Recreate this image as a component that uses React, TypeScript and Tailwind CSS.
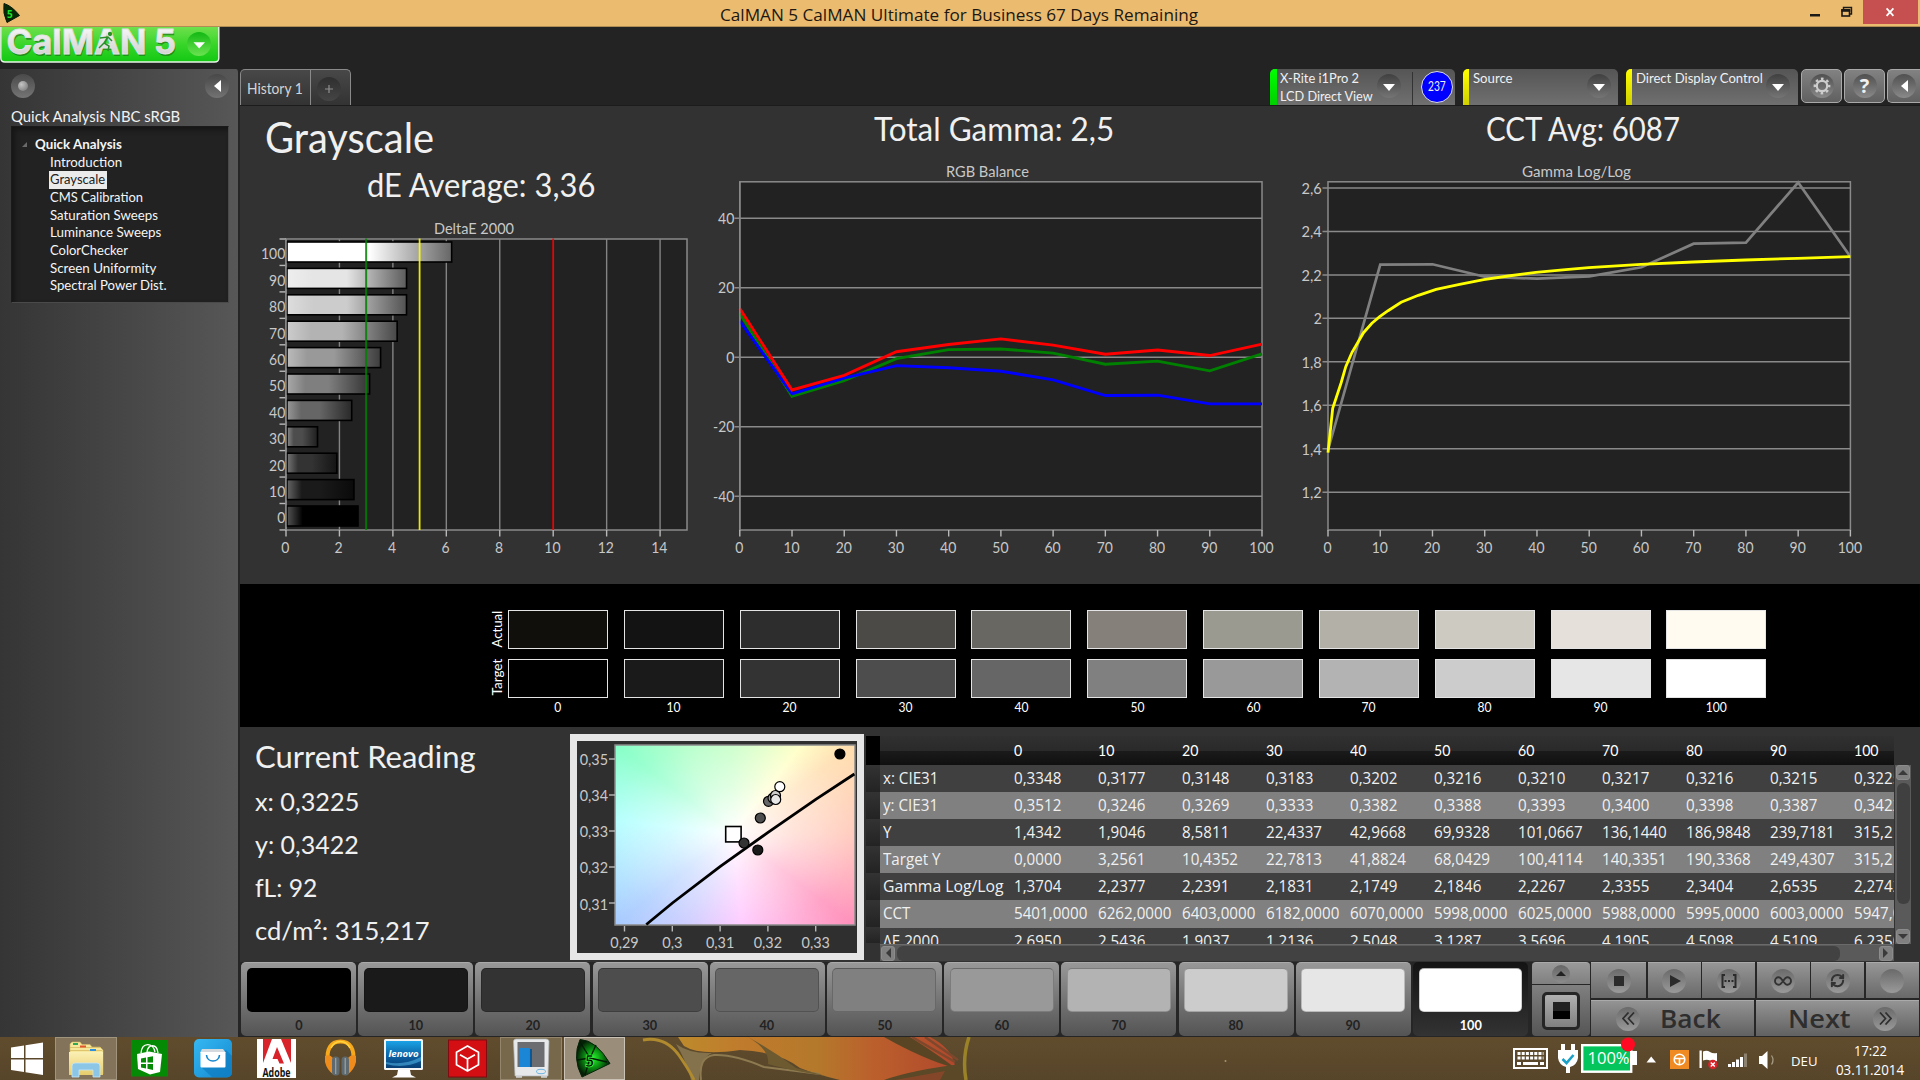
import { useLayoutEffect, useRef, useState, type ReactNode } from "react";
import { RefreshCw } from "lucide-react";

const LEVELS = [0, 10, 20, 30, 40, 50, 60, 70, 80, 90, 100];

const TREE = [
  { name: "Introduction", w: 72 },
  { name: "Grayscale", w: 55 },
  { name: "CMS Calibration", w: 93 },
  { name: "Saturation Sweeps", w: 108 },
  { name: "Luminance Sweeps", w: 111 },
  { name: "ColorChecker", w: 78 },
  { name: "Screen Uniformity", w: 106 },
  { name: "Spectral Power Dist.", w: 117 },
];

const ACTUAL = ["#110f0c", "#131313", "#2d2d2d", "#4b4a46", "#686762", "#85807a", "#9b9a90", "#b3b0a7", "#cccac1", "#e5e0d9", "#fffbf0"];
const TARGET = ["#000000", "#1a1a1a", "#333333", "#4d4d4d", "#666666", "#808080", "#999999", "#b3b3b3", "#cccccc", "#e6e6e6", "#ffffff"];

const DELTA_E = [2.695, 2.5436, 1.9037, 1.18, 2.46, 3.1287, 3.54, 4.16, 4.5098, 4.5109, 6.2];

const RGB = [
  { color: "#008000", v: [12.6, -11.2, -6.7, -0.4, 2.2, 2.4, 1.2, -2, -1.1, -3.9, 1] },
  { color: "#0000ff", v: [10.4, -10.5, -6, -2.4, -3, -4, -6.5, -11, -10.9, -13.4, -13.4] },
  { color: "#ff0000", v: [14, -9.4, -5.2, 1.6, 3.7, 5.3, 3.5, 0.9, 2.1, 0.5, 3.8] },
];

const GAMMA_Y = [450, 264.7, 264.3, 276.7, 278.7, 276.3, 267.3, 243.7, 242.7, 182.5, 256.7];
const GAMMA_TARGET = [
  [0, 452.7], [0.9, 408.3], [2.5, 383], [3.4, 366.7], [4.6, 352.3], [6.8, 332.7], [8.4, 323.3], [9.9, 316.7],
  [11.5, 310.7], [14, 302.3], [17.3, 295.3], [20.7, 289.3], [25.2, 284.3], [29.8, 279.7], [34.5, 276], [39.8, 272.3],
  [45.5, 269.7], [49.9, 267.7], [59.9, 264.3], [69.9, 262], [79.9, 260], [89.9, 258.3], [100, 256.7],
];

const TABLE = [
  ["x: CIE31", "0,3348", "0,3177", "0,3148", "0,3183", "0,3202", "0,3216", "0,3210", "0,3217", "0,3216", "0,3215", "0,3225"],
  ["y: CIE31", "0,3512", "0,3246", "0,3269", "0,3333", "0,3382", "0,3388", "0,3393", "0,3400", "0,3398", "0,3387", "0,3422"],
  ["Y", "1,4342", "1,9046", "8,5811", "22,4337", "42,9668", "69,9328", "101,0667", "136,1440", "186,9848", "239,7181", "315,2170"],
  ["Target Y", "0,0000", "3,2561", "10,4352", "22,7813", "41,8824", "68,0429", "100,4114", "140,3351", "190,3368", "249,4307", "315,2170"],
  ["Gamma Log/Log", "1,3704", "2,2377", "2,2391", "2,1831", "2,1749", "2,1846", "2,2267", "2,3355", "2,3404", "2,6535", "2,2742"],
  ["CCT", "5401,0000", "6262,0000", "6403,0000", "6182,0000", "6070,0000", "5998,0000", "6025,0000", "5988,0000", "5995,0000", "6003,0000", "5947,0000"],
  ["ΔE 2000", "2,6950", "2,5436", "1,9037", "1,2136", "2,5048", "3,1287", "3,5696", "4,1905", "4,5098", "4,5109", "6,2350"],
];

// Squeezes a single line of text horizontally to a given width
function Fit({ w, children, className = "origin-left" }: { w: number; children: ReactNode; className?: string }) {
  const ref = useRef<HTMLSpanElement>(null);
  const [k, setK] = useState(1);
  useLayoutEffect(() => {
    if (ref.current) setK(w / ref.current.offsetWidth);
  }, [w]);
  return (
    <span ref={ref} className={`inline-block whitespace-nowrap ${className}`} style={{ transform: `scaleX(${k})` }}>
      {children}
    </span>
  );
}

// Axis number in the condensed figures of the charts
function Num({ x, y, anchor = "middle", children }: { x: number; y: number; anchor?: "middle" | "end"; children: string | number }) {
  const s = String(children);
  const len = [...s].reduce((n, c) => n + (c === "," ? 4 : c === "-" ? 5 : 8.1), 0);
  return (
    <text x={x} y={y} textAnchor={anchor} textLength={len} lengthAdjust="spacingAndGlyphs">
      {s}
    </text>
  );
}

function TitleBar() {
  return (
    <header className="flex h-[27px] shrink-0 items-start border-b border-[#b08d54] bg-[#ebbc70]">
      <svg className="mt-[3px] ml-[2px] h-5 w-[19px]" viewBox="0 0 19 20">
        <path d="M2 0.5Q10 3 17.5 12.5L5 19.5Q0.5 10 2 0.5Z" fill="#042a06" stroke="#0a1a08" />
        <text x="5" y="14.5" fontSize="10" fontWeight="700" fill="#19e326" fontFamily="Open Sans, sans-serif">5</text>
      </svg>
      <div className="flex flex-1 justify-center pt-[3px] pl-[88px] font-['Open_Sans',sans-serif] text-[16.5px] leading-[23px] text-[#1c1710]">
        <Fit w={478} className="origin-center">CalMAN 5 CalMAN Ultimate for Business 67 Days Remaining</Fit>
      </div>
      <svg className="h-[25px] w-[110px]" viewBox="1810 0 110 25">
        <rect x="1810" y="14" width="10" height="2.5" fill="#1c1a16" />
        <path d="M1843.5 9V7.5H1851.5V14H1850" fill="none" stroke="#1c1a16" strokeWidth="1.4" />
        <rect x="1842" y="10" width="7.5" height="6" fill="none" stroke="#1c1a16" strokeWidth="1.6" />
        <rect x="1841.3" y="9" width="9" height="2.8" fill="#1c1a16" />
        <rect x="1863" y="0" width="55" height="24" fill="#c64f4f" />
        <path d="M1886.6 8.4L1893.4 15.8M1893.4 8.4L1886.6 15.8" stroke="#fff" strokeWidth="1.8" />
      </svg>
    </header>
  );
}

function Logo() {
  return (
    <svg className="h-[36px] w-[220px] overflow-visible" viewBox="0 27 220 36">
      <defs>
        <linearGradient id="lg" x1="0" y1="0" x2="0" y2="1">
          <stop offset="0" stopColor="#6fe04d" />
          <stop offset="0.5" stopColor="#38d529" />
          <stop offset="1" stopColor="#12c813" />
        </linearGradient>
        <linearGradient id="lt" x1="0" y1="0" x2="0" y2="1">
          <stop offset="0" stopColor="#ffffff" />
          <stop offset="1" stopColor="#c9c9c9" />
        </linearGradient>
        <linearGradient id="lc" x1="0" y1="0" x2="0" y2="1">
          <stop offset="0" stopColor="#12b814" />
          <stop offset="1" stopColor="#6be350" />
        </linearGradient>
      </defs>
      <path d="M0.8 27V58Q0.8 62 5 62H214.500Q218.800 62 218.800 58V27" fill="url(#lg)" stroke="#e9f5e6" strokeWidth="1.4" />
      <g fontFamily="Inter, sans-serif" fontWeight="700" fontSize="34">
        <text x="7.5" y="55.5" textLength="140" lengthAdjust="spacingAndGlyphs" fill="#20761c" opacity="0.7">CalMAN</text>
        <text x="155" y="55.5" textLength="22" lengthAdjust="spacingAndGlyphs" fill="#20761c" opacity="0.7">5</text>
        <text x="6.5" y="54" textLength="140" lengthAdjust="spacingAndGlyphs" fill="url(#lt)" stroke="#e2e2e2" strokeWidth="0.8">CalMAN</text>
        <text x="154" y="54" textLength="22" lengthAdjust="spacingAndGlyphs" fill="url(#lt)" stroke="#e2e2e2" strokeWidth="0.8">5</text>
      </g>
      {/* running man over the A */}
      <g stroke="#27902a" strokeWidth="1.5" fill="none">
        <circle cx="110" cy="34" r="1.4" fill="#27902a" />
        <path d="M108 37L104 43L109 46L108 51M104 43L99 48M100 38L108 37L112 41" />
      </g>
      <circle cx="199" cy="44" r="12" fill="url(#lc)" />
      <path d="M193.5 42.2H205L199.2 48.5Z" fill="#fff" />
    </svg>
  );
}

function Sidebar() {
  return (
    <aside className="flex w-[240px] flex-col rounded-tr-[4px] border-r-[2px] border-[#252525] bg-linear-to-r from-[#353535] to-[#575757]">
      <div className="flex h-[36px] items-start justify-between pt-[5px] pr-[9px] pl-[11px]">
        <div className="flex size-6 items-center justify-center rounded-full bg-linear-to-b from-[#4a4a4a] to-[#757575]">
          <div className="size-[10px] rounded-full bg-[radial-gradient(circle_at_35%_35%,#c4c4c4,#6f6f6f)]" />
        </div>
        <div className="flex size-6 items-center justify-center rounded-full bg-linear-to-b from-[#484848] to-[#737373]">
          <svg className="h-3 w-[7px]" viewBox="0 0 7 12"><path d="M7 0V12L0 6Z" fill="#fff" /></svg>
        </div>
      </div>
      <div className="h-[21px] pl-[11px] text-[16px] leading-[21px] text-[#f2f2f2]">
        <Fit w={169}>Quick Analysis NBC sRGB</Fit>
      </div>
      <div className="mr-[9px] ml-[11px] h-[177px] border border-[#1a1a1a] border-r-[#4a4a4a] border-b-[#4a4a4a] bg-[#222] pt-[7px] text-[13.5px] text-[#f5f5f5] shadow-[inset_3px_3px_5px_#161616]">
        <div className="flex h-[20px] items-center gap-[8px] pl-[10px] font-bold">
          <svg className="h-[5px] w-[5px]" viewBox="0 0 5 5"><path d="M5 0V5H0Z" fill="#6a6a6a" /></svg>
          <Fit w={87}>Quick Analysis</Fit>
        </div>
        {TREE.map((t) => (
          <div key={t.name} className="flex h-[17.6px] items-center pl-[37px] leading-[17.6px]">
            {t.name === "Grayscale" ? (
              <div className="h-[18px] w-[58px] bg-[#ebebeb] pl-[1px] text-[#222]"><Fit w={t.w}>{t.name}</Fit></div>
            ) : (
              <div className="pl-[1px]"><Fit w={t.w}>{t.name}</Fit></div>
            )}
          </div>
        ))}
      </div>
    </aside>
  );
}

function DropCircle() {
  return (
    <div className="mt-[5px] flex size-6 items-center justify-center rounded-full bg-linear-to-b from-[#404040] to-[#757575]">
      <svg className="mt-[3px] h-[7px] w-[12px]" viewBox="0 0 12 7"><path d="M0 0H12L6 7Z" fill="#fff" /></svg>
    </div>
  );
}

function TopTabs() {
  return (
    <div className="flex h-[36px] items-start text-[14.5px]">
      <div className="flex h-[36px] w-[111px] rounded-t-[5px] border border-b-0 border-[#8a8a8a] bg-linear-to-b from-[#484848] to-[#333] text-[#d5d5d5]">
        <div className="w-[70px] border-r border-[#8a8a8a] pl-[6px] leading-[38px]"><Fit w={56}>History 1</Fit></div>
        <div className="mt-[7px] ml-[6px] flex size-6 items-center justify-center rounded-full bg-linear-to-b from-[#2f2f2f] to-[#454545]">
          <svg className="size-[8px]" viewBox="0 0 8 8"><path d="M4 0V8M0 4H8" stroke="#909090" strokeWidth="1.2" /></svg>
        </div>
      </div>
      <div className="ml-auto flex items-start text-[#f0f0f0]">
        <div className="mr-[8px] flex h-9 w-[185px] overflow-hidden rounded-t-[5px] bg-linear-to-b from-[#555] to-[#707070]">
          <div className="w-[7px] bg-linear-to-b from-[#00ff00] to-[#00cf00]" />
          <div className="w-[100px] pt-px pl-[3px] text-[13.5px] leading-[17.5px]">
            <div><Fit w={79}>X-Rite i1Pro 2</Fit></div>
            <div><Fit w={93}>LCD Direct View</Fit></div>
          </div>
          <DropCircle />
          <div className="mt-[3px] ml-[11px] h-[33px] border-l border-[#333]" />
          <div className="mt-[2px] ml-[8px] flex h-8 w-8 items-center justify-center rounded-full border border-[#ddd] bg-[#0000ff] text-[12.5px]">
            <Fit w={18} className="origin-center">237</Fit>
          </div>
        </div>
        <div className="mr-[8px] flex h-9 w-[155px] overflow-hidden rounded-t-[5px] bg-linear-to-b from-[#555] to-[#707070]">
          <div className="w-[6px] bg-linear-to-b from-[#ffff00] to-[#d0d000]" />
          <div className="w-[118px] pt-px pl-[4px] text-[13.5px] leading-[17.5px]"><Fit w={40}>Source</Fit></div>
          <DropCircle />
        </div>
        <div className="mr-[3px] flex h-9 w-[172px] overflow-hidden rounded-t-[5px] bg-linear-to-b from-[#555] to-[#707070]">
          <div className="w-[6px] bg-linear-to-b from-[#ffff00] to-[#d0d000]" />
          <div className="w-[134px] pt-px pl-[4px] text-[13.5px] leading-[17.5px]"><Fit w={127}>Direct Display Control</Fit></div>
          <DropCircle />
        </div>
        <div className="mr-[2px] flex h-[34px] w-[41px] items-center justify-center rounded-[5px] border-[1.5px] border-[#a9a9a9] bg-linear-to-b from-[#828282] to-[#606060]">
          <div className="flex size-6 items-center justify-center rounded-full bg-linear-to-b from-[#505050] to-[#8a8a8a]">
            <svg className="size-[18px]" viewBox="0 0 18 18" fill="none" stroke="#cdcdcd">
              <circle cx="9" cy="9" r="5.2" strokeWidth="2.2" />
              <circle cx="9" cy="9" r="7.2" strokeWidth="2.4" strokeDasharray="2.6 3.055" strokeDashoffset="1.3" />
            </svg>
          </div>
        </div>
        <div className="mr-[2px] flex h-[34px] w-[41px] items-center justify-center rounded-[5px] border-[1.5px] border-[#a9a9a9] bg-linear-to-b from-[#828282] to-[#606060]">
          <div className="flex size-6 items-center justify-center rounded-full bg-linear-to-b from-[#505050] to-[#8a8a8a] font-['Open_Sans',sans-serif] text-[20px] font-bold">?</div>
        </div>
        <div className="flex h-[34px] w-[33px] items-center justify-center rounded-l-[5px] border-[1.5px] border-r-0 border-[#a9a9a9] bg-linear-to-b from-[#828282] to-[#606060]">
          <div className="flex size-6 items-center justify-center rounded-full bg-linear-to-b from-[#505050] to-[#8a8a8a]">
            <svg className="h-3 w-[7px]" viewBox="0 0 7 12"><path d="M7 0V12L0 6Z" fill="#fff" /></svg>
          </div>
        </div>
      </div>
    </div>
  );
}

const shade = (v: number) => `rgb(${v},${v},${v})`;

function DeltaChart() {
  const px = (v: number) => 286 + v * 26.72;
  return (
    <svg className="h-[364px] w-[460px] font-[Lato,sans-serif]" viewBox="240 220 460 364" fontSize="15" fill="#c8c8c8">
      <text x="474" y="233.5" textAnchor="middle" textLength="80" lengthAdjust="spacingAndGlyphs">DeltaE 2000</text>
      <rect x="286" y="239" width="401" height="291" fill="#222" stroke="#8a8a8a" strokeWidth="1.5" />
      {[2, 4, 6, 8, 12, 14].map((v) => (
        <path key={v} d={`M${px(v)} 239V530`} stroke="#848484" strokeWidth="1.4" />
      ))}
      {[0, 2, 4, 6, 8, 10, 12, 14].map((v) => (
        <g key={v}>
          <path d={`M${px(v)} 530V536.5`} stroke="#b8b8b8" strokeWidth="1.4" />
          <Num x={px(v) - 0.8} y={552.5}>{v}</Num>
        </g>
      ))}
      {Array.from({ length: 12 }, (_, i) => (
        <path key={i} d={`M279.5 ${239 + i * 26.45}H286`} stroke="#b8b8b8" strokeWidth="1.4" />
      ))}
      {LEVELS.map((l, i) => {
        const row = 10 - i;
        const c = Math.round(l * 2.55);
        return (
          <g key={l}>
            <linearGradient id={`bar${l}`}>
              <stop offset="0" stopColor={shade(Math.round(Math.min(255, c + (255 - c) * 0.33)))} />
              <stop offset="0.22" stopColor={shade(c)} />
              <stop offset="0.5" stopColor={shade(c)} />
              <stop offset="1" stopColor={shade(Math.round(c * 0.4))} />
            </linearGradient>
            <rect x="287" y={242 + row * 26.4} width={px(DELTA_E[i]) - 287} height="20" fill={`url(#bar${l})`} stroke="#000" strokeWidth="1.6" />
            <Num x={285.3} y={259.3 + row * 26.4} anchor="end">{l}</Num>
          </g>
        );
      })}
      <path d={`M${px(0)} 239V530`} stroke="#8a8a8a" strokeWidth="1.5" />
      <path d={`M${px(3)} 238.5V530`} stroke="#008000" strokeOpacity="0.85" strokeWidth="2" />
      <path d={`M${px(5)} 238.5V530`} stroke="#ffff00" strokeOpacity="0.9" strokeWidth="1.8" />
      <path d={`M${px(10)} 238.5V530`} stroke="#ff0000" strokeOpacity="0.9" strokeWidth="1.8" />
    </svg>
  );
}

function XAxis({ x0, w }: { x0: number; w: number }) {
  return (
    <>
      {LEVELS.map((l) => (
        <g key={l}>
          <path d={`M${x0 + (l / 100) * w} 530V536.5`} stroke="#b8b8b8" strokeWidth="1.4" />
          <Num x={x0 + (l / 100) * w - 0.5} y={552.5}>{l}</Num>
        </g>
      ))}
    </>
  );
}

function BalanceChart() {
  const px = (l: number) => 739.8 + l * 5.222;
  const py = (v: number) => 357.3 - v * 3.475;
  return (
    <svg className="h-[424px] w-[580px] font-[Lato,sans-serif]" viewBox="700 160 580 424" fontSize="15" fill="#c8c8c8">
      <text x="987.4" y="176.7" textAnchor="middle" textLength="83" lengthAdjust="spacingAndGlyphs">RGB Balance</text>
      <rect x="739.8" y="181.8" width="522.2" height="348.2" fill="#222" stroke="#8a8a8a" strokeWidth="1.5" />
      {[40, 20, 0, -20, -40].map((v) => (
        <g key={v}>
          <path d={`M734.5 ${py(v)}H1262`} stroke="#8a8a8a" strokeWidth="1.5" />
          <Num x={734.3} y={py(v) + 5.6} anchor="end">{v}</Num>
        </g>
      ))}
      <XAxis x0={739.8} w={522.2} />
      {RGB.map((s) => (
        <polyline key={s.color} fill="none" stroke={s.color} strokeWidth="2.9" points={s.v.map((v, i) => `${px(i * 10)},${py(v)}`).join(" ")} />
      ))}
      <path d="M739.8 181.8V530" stroke="#8a8a8a" strokeWidth="1.5" />
    </svg>
  );
}

function GammaChart() {
  const px = (l: number) => 1328 + l * 5.224;
  return (
    <svg className="h-[424px] w-[640px] font-[Lato,sans-serif]" viewBox="1280 160 640 424" fontSize="15" fill="#c8c8c8">
      <text x="1576.5" y="176.7" textAnchor="middle" textLength="109" lengthAdjust="spacingAndGlyphs">Gamma Log/Log</text>
      <rect x="1328" y="181.8" width="522.4" height="348.2" fill="#222" stroke="#8a8a8a" strokeWidth="1.5" />
      {["2,6", "2,4", "2,2", "2", "1,8", "1,6", "1,4", "1,2"].map((v, i) => (
        <g key={v}>
          <path d={`M1322.5 ${188 + i * 43.45}H1850`} stroke="#8a8a8a" strokeWidth="1.5" />
          <Num x={1321.8} y={193.6 + i * 43.5} anchor="end">{v}</Num>
        </g>
      ))}
      <XAxis x0={1328} w={522.4} />
      <polyline fill="none" stroke="#808080" strokeWidth="2.7" points={GAMMA_Y.map((y, i) => `${px(i * 10)},${y}`).join(" ")} />
      <polyline fill="none" stroke="#ffff00" strokeWidth="2.8" points={GAMMA_TARGET.map(([x, y]) => `${px(x)},${y}`).join(" ")} />
    </svg>
  );
}

function Charts() {
  return (
    <section className="flex h-[479px] border-t border-[#1c1c1c] bg-[#323232] text-[#f0f0f0]">
      <div className="w-[460px]">
        <div className="h-[114px] overflow-hidden">
          <div className="h-[58px] pt-[3px] pl-[25px] text-[42px] leading-[56px]"><Fit w={169}>Grayscale</Fit></div>
          <div className="pl-[127px] text-[32px] leading-[42px]"><Fit w={228}>dE Average: 3,36</Fit></div>
        </div>
        <DeltaChart />
      </div>
      <div className="w-[580px]">
        <div className="h-[54px] pl-[174px] text-[32px] leading-[45px]"><Fit w={240}>Total Gamma: 2,5</Fit></div>
        <BalanceChart />
      </div>
      <div className="w-[640px]">
        <div className="h-[54px] pl-[206px] text-[32px] leading-[45px]"><Fit w={194}>CCT Avg: 6087</Fit></div>
        <GammaChart />
      </div>
    </section>
  );
}

function Swatches() {
  return (
    <section className="flex h-[143px] bg-black pt-[26px] pl-[247px] text-[13px] text-white">
      <div className="flex w-[21px] flex-col gap-[9px] pl-[1px]">
        {["Actual", "Target"].map((t) => (
          <div key={t} className="flex h-[39px] w-[18px] items-center justify-center">
            <span className="-rotate-90 text-[13.5px]"><Fit w={37} className="origin-center">{t}</Fit></span>
          </div>
        ))}
      </div>
      <div className="flex gap-[15.85px]">
        {LEVELS.map((l, i) => (
          <div key={l} className="w-[100px]">
            <div className="mb-[9.5px] h-[39px] border-[1.5px] border-[#e4e4e4]" style={{ backgroundColor: ACTUAL[i] }} />
            <div className="h-[39px] border-[1.5px] border-[#e4e4e4]" style={{ backgroundColor: TARGET[i] }} />
            <div className="text-center text-[13px] leading-[18px]">
              <span className="inline-block scale-x-[0.93]">{l}</span>
            </div>
          </div>
        ))}
      </div>
    </section>
  );
}

const DOTS = [
  { x: 839.9, y: 754, c: "#000" },
  { x: 757.8, y: 850, c: "#1a1a1a" },
  { x: 744, y: 843, c: "#333" },
  { x: 760.3, y: 818, c: "#4d4d4d" },
  { x: 768.5, y: 801.3, c: "#666" },
  { x: 773, y: 798, c: "#999" },
  { x: 775.5, y: 795.5, c: "#ccc" },
  { x: 775.7, y: 799.5, c: "#e6e6e6" },
  { x: 779.8, y: 786.7, c: "#fff" },
];

function CieBox() {
  return (
    <div className="h-[226px] w-[294px] shrink-0 border-[7px] border-[#e6e6e6] bg-[#2f2f2f] pt-[4px] pl-[38px]">
      <svg
        className="h-[180px] w-[240px] overflow-visible bg-[radial-gradient(ellipse_75%_75%_at_49%_49%,#ffffff,rgba(255,255,255,0.55)_35%,rgba(255,255,255,0.2)_70%,transparent),conic-gradient(from_0deg_at_49%_49%,#beffbe,#e0ffbe_22deg,#ffffbe_38deg,#ffdcaa_54deg,#ffbeac_90deg,#ff8cb8_127deg,#ffa8dc_150deg,#ffbeff_174deg,#c8c4ff_205deg,#a4c8ff_232deg,#a0ffff_276deg,#80ffc4_307deg,#a4ffc0_330deg,#beffbe)] font-[Lato,sans-serif]"
        viewBox="615 745 240 180"
        fontSize="15"
        fill="#c8c8c8"
      >
        <rect x="615" y="745" width="240" height="180" fill="none" stroke="#8a8a8a" strokeWidth="1.5" />
        {["0,35", "0,34", "0,33", "0,32", "0,31"].map((t, i) => (
          <g key={t}>
            <path d={`M609 ${759 + i * 36}H615`} stroke="#b8b8b8" strokeWidth="1.4" />
            <Num x={608} y={764.8 + i * 36.2} anchor="end">{t}</Num>
          </g>
        ))}
        {["0,29", "0,3", "0,31", "0,32", "0,33"].map((t, i) => (
          <g key={t}>
            <path d={`M${624.5 + i * 47.8} 926V931.5`} stroke="#b8b8b8" strokeWidth="1.4" />
            <Num x={624.5 + i * 47.8} y={948.2}>{t}</Num>
          </g>
        ))}
        <path d="M646.3 924.5L672.4 903L720 866.7L767.7 832.7L815.8 799.3L854.4 774" fill="none" stroke="#000" strokeWidth="2.8" />
        <rect x="725.7" y="826.5" width="15.4" height="15.4" fill="#fff" stroke="#000" strokeWidth="1.6" />
        {DOTS.map((d) => (
          <circle key={d.x} cx={d.x} cy={d.y} r="5" fill={d.c} stroke="#000" strokeWidth="1.2" />
        ))}
      </svg>
    </div>
  );
}

function ScrollBtn({ d, className }: { d: string; className: string }) {
  return (
    <div className={`flex shrink-0 items-center justify-center rounded-[3px] border border-[#8c8c8c] bg-[#808080] ${className}`}>
      <svg className="size-[10px]" viewBox="0 0 10 10"><path d={d} fill="#3a3a3a" /></svg>
    </div>
  );
}

function DataTable() {
  return (
    <div className="mt-[9px] ml-[2px] flex h-[225px]">
      <div className="w-[14px]">
        <div className="h-[29px] bg-black" />
        {TABLE.map((r) => (
          <div key={r[0]} className="h-[27px] bg-linear-to-b from-[#333] to-[#232323] last:h-[16px]" />
        ))}
      </div>
      <div className="w-[1014px]">
        <div className="flex h-[29px] overflow-hidden bg-[linear-gradient(#303030,#2a2a2a_50%,#1b1b1b_50%,#101010)] pl-[134px] text-[15px] leading-[29px] text-white">
          {LEVELS.map((l) => (
            <div key={l} className="w-[84px] shrink-0">
              <span className="inline-block origin-left scale-x-[0.94]">{l}</span>
            </div>
          ))}
        </div>
        <div className="h-[179px] overflow-hidden font-['Open_Sans',sans-serif] text-[16.3px] leading-[27px] text-[#f0f0f0]">
          {TABLE.map((r) => (
            <div key={r[0]} className="flex h-[27.1px] bg-[#404040] whitespace-nowrap even:bg-[#808080]">
              {r.map((c, i) => (
                <div key={i} className={i === 0 ? "w-[134px] shrink-0 pl-[3px]" : "w-[84px] shrink-0"}>
                  {c === "Gamma Log/Log" ? (
                    <Fit w={121}>{c}</Fit>
                  ) : (
                    <span className="inline-block origin-left scale-x-[0.932]">{c}</span>
                  )}
                </div>
              ))}
            </div>
          ))}
        </div>
        <div className="flex h-[17px] items-center border-t border-[#6a6a6a] bg-[#5a5a5a] px-px">
          <ScrollBtn d="M8 0V10L3 5Z" className="h-[15px] w-[14px]" />
          <div className="ml-[2px] h-[15px] w-[943px] rounded-[6px] bg-[#424242]" />
          <ScrollBtn d="M2 0V10L7 5Z" className="ml-auto h-[15px] w-[14px]" />
        </div>
      </div>
      <div className="mt-[29px] ml-px flex h-[179px] w-4 flex-col items-center bg-[#5a5a5a]">
        <ScrollBtn d="M0 7H10L5 2Z" className="h-[15px] w-[14px]" />
        <div className="mt-[3px] h-[121px] w-[13px] rounded-[6px] bg-[#404040]" />
        <ScrollBtn d="M0 2H10L5 7Z" className="mt-auto h-[15px] w-[14px]" />
      </div>
    </div>
  );
}

function Reading() {
  return (
    <section className="flex h-[235px] bg-[#323232] text-[#f0f0f0]">
      <div className="w-[330px] pt-[7px] pl-[15px] text-[25px] leading-[43px]">
        <div className="h-[46px] text-[31px] leading-[44px]"><Fit w={221}>Current Reading</Fit></div>
        <div><Fit w={104}>x: 0,3225</Fit></div>
        <div><Fit w={104}>y: 0,3422</Fit></div>
        <div><Fit w={62}>fL: 92</Fit></div>
        <div><Fit w={175}>cd/m²: 315,217</Fit></div>
      </div>
      <div className="pt-[7px]"><CieBox /></div>
      <DataTable />
    </section>
  );
}

function RoundIcon({ children }: { children?: ReactNode }) {
  return (
    <div className="flex size-6 items-center justify-center rounded-full bg-linear-to-b from-[#6a6a6a] to-[#9a9a9a]">
      {children}
    </div>
  );
}

const TOOLS: ReactNode[] = [
  <svg key="s" className="size-[10px]" viewBox="0 0 10 10"><rect width="10" height="10" fill="#2b2b2b" /></svg>,
  <svg key="p" className="ml-[2px] h-3 w-[11px]" viewBox="0 0 11 12"><path d="M0 0L11 6L0 12Z" fill="#2b2b2b" /></svg>,
  <svg key="r" className="h-[14px] w-4" viewBox="0 0 16 14">
    <path d="M4 1H1.5V13H4M12 1H14.5V13H12" fill="none" stroke="#2b2b2b" strokeWidth="2" />
    <path d="M3.5 7H12.5" stroke="#2b2b2b" strokeWidth="2" strokeDasharray="2 1.5" />
  </svg>,
  <svg key="i" className="h-[10px] w-[18px]" viewBox="0 0 18 10">
    <path d="M9 5C7 2 6 1.2 4.6 1.2A3.6 3.8 0 0 0 4.6 8.8C6 8.8 7 8 9 5C11 2 12 1.2 13.4 1.2A3.6 3.8 0 0 1 13.4 8.8C12 8.8 11 8 9 5Z" fill="none" stroke="#333" strokeWidth="1.9" />
  </svg>,
  <RefreshCw key="l" size={15} color="#333" strokeWidth={3.2} />,
  null,
];

function Patterns() {
  return (
    <section className="flex h-[75px] bg-[#262626]">
      <div className="flex w-[1292px] gap-[2.2px] pl-px">
        {LEVELS.map((l, i) => (
          <div
            key={l}
            className={
              l === 100
                ? "h-[74px] w-[115px] rounded-[5px] bg-linear-to-b from-[#141414] to-[#333] px-[6px] pt-[6px] text-white"
                : "h-[74px] w-[115px] rounded-[5px] border-t border-[#aaa] bg-linear-to-b from-[#989898] to-[#545454] px-[5.5px] pt-[5px] text-[#222]"
            }
          >
            <div className="h-[44px] rounded-[5px] border border-[#00000030] border-t-[#00000050]" style={{ backgroundColor: TARGET[i] }} />
            <div className="pt-[4px] text-center text-[13.5px] leading-[18px] font-bold">
              <span className="inline-block scale-x-[0.94]">{l}</span>
            </div>
          </div>
        ))}
      </div>
      <div className="flex w-[58px] flex-col">
        <div className="flex h-[22px] items-center justify-center rounded-t-[4px] border-t border-[#aaa] bg-linear-to-b from-[#999] to-[#808080]">
          <div className="flex size-[18px] items-center justify-center rounded-full bg-linear-to-b from-[#666] to-[#8c8c8c]">
            <svg className="h-[5px] w-[10px]" viewBox="0 0 10 5"><path d="M0 5H10L5 0Z" fill="#222" /></svg>
          </div>
        </div>
        <div className="mt-px flex h-[51px] items-center justify-center rounded-b-[4px] bg-linear-to-b from-[#808080] to-[#555]">
          <div className="flex size-[38px] items-center justify-center rounded-[5px] border-[3px] border-[#252525] bg-linear-to-b from-[#b0b0b0] to-[#808080]">
            <div className="size-[17px] bg-[linear-gradient(#222_50%,#000_50%)]" />
          </div>
        </div>
      </div>
      <div className="ml-px flex-1">
        <div className="flex h-[36px] gap-[1.5px] pr-px">
          {TOOLS.map((t, i) => (
            <div key={i} className="flex w-[53px] items-center justify-center border-t border-[#aaa] bg-linear-to-b from-[#969696] to-[#696969] first:w-[55px] last:flex-1">
              <RoundIcon>{t}</RoundIcon>
            </div>
          ))}
        </div>
        <div className="mt-[2px] flex h-[36px] gap-[1.5px] pr-px font-['Open_Sans',sans-serif] text-[25px] font-semibold text-[#2e2e2e]">
          <div className="flex w-[163px] items-center border-t border-[#aaa] bg-linear-to-b from-[#949494] to-[#616161] pl-[25px]">
            <RoundIcon>
              <svg className="h-[13px] w-[13px]" viewBox="0 0 13 13"><path d="M6.5 0.5L1 6.5L6.5 12.5M12 0.5L6.5 6.5L12 12.5" fill="none" stroke="#2e2e2e" strokeWidth="1.7" /></svg>
            </RoundIcon>
            <span className="ml-[20px]"><Fit w={61}>Back</Fit></span>
          </div>
          <div className="flex flex-1 items-center justify-between border-t border-[#aaa] bg-linear-to-b from-[#949494] to-[#616161] pr-[22px] pl-[32px]">
            <Fit w={63}>Next</Fit>
            <RoundIcon>
              <svg className="h-[13px] w-[13px]" viewBox="0 0 13 13"><path d="M1 0.5L6.5 6.5L1 12.5M6.5 0.5L12 6.5L6.5 12.5" fill="none" stroke="#2e2e2e" strokeWidth="1.7" /></svg>
            </RoundIcon>
          </div>
        </div>
      </div>
    </section>
  );
}

function TaskIcons() {
  return (
    <svg className="h-[43px] w-[640px]" viewBox="0 1037 640 43">
      <defs>
        <linearGradient id="bag" x1="0" y1="0" x2="1" y2="1">
          <stop offset="0" stopColor="#35b8f2" />
          <stop offset="1" stopColor="#1287cf" />
        </linearGradient>
        <linearGradient id="folder" x1="0" y1="0" x2="0" y2="1">
          <stop offset="0" stopColor="#fbf0b4" />
          <stop offset="1" stopColor="#e6cc6c" />
        </linearGradient>
        <linearGradient id="screen" x1="0" y1="0" x2="0" y2="1">
          <stop offset="0" stopColor="#1ba3e6" />
          <stop offset="0.6" stopColor="#0a5d9e" />
          <stop offset="1" stopColor="#083e74" />
        </linearGradient>
        <radialGradient id="fan">
          <stop offset="0" stopColor="#27f52c" />
          <stop offset="0.5" stopColor="#0a8f12" />
          <stop offset="1" stopColor="#042006" />
        </radialGradient>
      </defs>
      {/* start */}
      <path d="M11 1047.5L24 1045.5V1058H11ZM25.5 1045.2L43 1042.5V1058H25.5ZM11 1059.5H24V1072L11 1070ZM25.5 1059.5H43V1075L25.5 1072.2Z" fill="#fff" />
      {/* file explorer */}
      <rect x="55.5" y="1037.5" width="61" height="42" fill="#82735a" stroke="#a1947d" />
      <path d="M70 1044L72 1042H80L82 1044.5H90L92 1047H100L103 1050V1074H70Z" fill="#f6e79a" stroke="#cfb75e" strokeWidth="0.6" />
      <path d="M69 1052H103V1075H69Z" fill="url(#folder)" />
      <path d="M70 1047.5H101M70 1050.5H102" stroke="#d8bd62" strokeWidth="0.8" />
      <rect x="73" y="1043" width="5" height="2" fill="#33a852" />
      <rect x="80" y="1045.5" width="6" height="2" fill="#e4572e" />
      <rect x="90" y="1049" width="6" height="2" fill="#2d8fdd" />
      <path d="M72 1077V1066Q72 1063 75 1063H97Q100 1063 100 1066V1077H93V1070H79V1077Z" fill="#8cc6e6" stroke="#c7e7f6" strokeWidth="0.8" />
      {/* store */}
      <rect x="131" y="1040" width="37" height="36.5" fill="#058a05" />
      <path d="M137 1054L149 1051.500L162 1054L160 1072L150 1074.500L138 1069Z" fill="#fff" />
      <path d="M141 1053C142 1042 153 1042 155 1052M147 1052C148 1044 157 1043 158 1053" fill="none" stroke="#fff" strokeWidth="1.3" />
      <path d="M141 1058.5L146 1057.5V1062.5H141ZM147.500 1057.300L153 1056.300V1062.5H147.500ZM141 1064H146V1068.500L141 1067.500ZM147.500 1064H153V1070L147.500 1068.800Z" fill="#058a05" />
      {/* shopping bag */}
      <rect x="194" y="1039" width="38" height="38.5" rx="5" fill="url(#bag)" />
      <path d="M226 1050L232 1056V1072Q232 1077 227 1077H212L201 1067Z" fill="#0f7cc0" opacity="0.7" />
      <path d="M202 1049H223L226 1053H200Z" fill="#d4dade" />
      <rect x="200.5" y="1052" width="25" height="15.5" rx="1" fill="#fff" />
      <path d="M206.5 1055C207 1063 219 1063 219.5 1055" fill="none" stroke="#1287cf" strokeWidth="1.6" />
      {/* Adobe */}
      <rect x="257" y="1039" width="39" height="39" fill="#fff" />
      <path d="M263 1039H272L263 1063ZM281 1039H291V1063ZM277 1047L284 1063.500H279.5L277.5 1059H272.5Z" fill="#d8232a" />
      <text x="276.5" y="1077" textAnchor="middle" fontSize="12" fontWeight="700" textLength="28" lengthAdjust="spacingAndGlyphs" fontFamily="Open Sans, sans-serif" fill="#111">Adobe</text>
      {/* headphones */}
      <path d="M328 1062C326 1049 331 1041.500 340.500 1041.500S355 1049 353 1062" fill="none" stroke="#f7a81b" strokeWidth="4" />
      <path d="M331 1048Q334 1041.500 340.500 1041.500T350 1048" fill="none" stroke="#ffd23f" strokeWidth="1.6" />
      <path d="M325 1056Q330 1054 333 1058V1074Q327 1070 325 1062ZM356 1056Q351 1054 348 1058V1074Q354 1070 356 1062Z" fill="#ef8c1c" />
      <rect x="332" y="1056.500" width="7.5" height="19" rx="3.5" fill="#5f6a70" />
      <rect x="341.500" y="1056.500" width="7.5" height="19" rx="3.5" fill="#5f6a70" />
      <path d="M335.700 1058V1074M345.200 1058V1074" stroke="#9aa4a9" strokeWidth="1.2" />
      {/* lenovo */}
      <rect x="384" y="1039" width="39" height="31" rx="1.5" fill="#f4f4f4" />
      <rect x="386" y="1041" width="35" height="27" fill="url(#screen)" />
      <path d="M386 1062Q403 1066 421 1057V1061Q404 1069 386 1064Z" fill="#5cc1ef" opacity="0.5" />
      <text x="403.5" y="1056.5" textAnchor="middle" fontSize="9" fontStyle="italic" fontWeight="700" textLength="30" lengthAdjust="spacingAndGlyphs" fontFamily="Open Sans, sans-serif" fill="#fff">lenovo</text>
      <path d="M398 1070H410L411 1075L416 1077.5H392L397 1075Z" fill="#fff" />
      {/* red cube */}
      <rect x="448.5" y="1040" width="38" height="37" fill="#d40f14" stroke="#7d0d10" />
      <path d="M467.5 1046L478.5 1052.3V1064.7L467.5 1071L456.5 1064.7V1052.3ZM467.5 1071V1059L460 1054.8M467.5 1059L475 1054.8" fill="none" stroke="#fff" strokeWidth="1.7" />
      {/* tower pc */}
      <rect x="500.5" y="1037.5" width="61" height="42" fill="#77674b" stroke="#93866d" />
      <path d="M513.5 1041Q514 1039 516 1039H546Q548.5 1039 549 1041L548 1076H515Z" fill="#e6e8ea" stroke="#b0b4b8" strokeWidth="0.7" />
      <rect x="517.5" y="1042" width="27" height="25" fill="#6b6d70" />
      <rect x="520" y="1048" width="9" height="19" fill="#1c86d6" />
      <rect x="530" y="1049" width="2" height="18" fill="#0d5794" />
      <ellipse cx="541" cy="1071.5" rx="4.5" ry="2.2" fill="none" stroke="#4ba7e0" strokeWidth="0.8" />
      <rect x="516" y="1076" width="6" height="1.8" fill="#ccc" />
      <rect x="541" y="1076" width="6" height="1.8" fill="#ccc" />
      {/* CalMAN */}
      <rect x="564.5" y="1037.5" width="60" height="42" fill="#9a8e7b" stroke="#c9c2b5" />
      <path d="M580 1039.5Q596 1040 610 1063.5L582 1077Q572 1058 580 1039.5Z" fill="url(#fan)" stroke="#06240a" />
      <path d="M590 1058L580 1042M590 1058L596 1045M590 1058L577 1060M590 1058L607 1062M590 1058L585 1075" stroke="#031a05" strokeWidth="1.3" />
      <text x="585" y="1066.5" fontSize="16" fontWeight="700" fontFamily="Open Sans, sans-serif" fill="#000" stroke="#49ff50" strokeWidth="0.7">5</text>
    </svg>
  );
}

// Strip of the desktop painting that shows through the taskbar
function Painting() {
  return (
    <svg className="h-[43px] w-[860px]" viewBox="640 1037 860 43">
      <defs>
        <linearGradient id="paint">
          <stop offset="0" stopColor="#bd8a2c" />
          <stop offset="0.25" stopColor="#c07a2c" />
          <stop offset="0.5" stopColor="#b4792b" />
          <stop offset="0.7" stopColor="#bb602c" />
          <stop offset="1" stopColor="#b0482c" />
        </linearGradient>
      </defs>
      <path d="M678 1037H930Q952 1048 955 1066Q938 1080 900 1080H840Q815 1074 800 1068Q780 1052 740 1050Q700 1056 684 1046Z" fill="url(#paint)" />
      <path d="M676 1044Q690 1054 712 1053Q700 1058 699 1080H691Q686 1060 676 1044Z" fill="#83724c" />
      <path d="M643 1040Q664 1036 678 1054Q688 1068 694 1080" fill="none" stroke="#b08a2e" strokeWidth="3" />
      <path d="M701 1080Q698 1057 714 1055Q734 1054 764 1067L820 1074" fill="none" stroke="#8d7a50" strokeWidth="2" />
      <path d="M748 1037Q775 1052 796 1068L826 1076Q788 1070 768 1064Q770 1050 748 1037Z" fill="#6d5a30" />
      <path d="M884 1037H910Q940 1056 955 1068Q925 1060 884 1037Z" fill="#594524" />
      <path d="M912 1037L955 1062M925 1037L958 1060" stroke="#7e482c" strokeWidth="2.5" fill="none" />
      <path d="M884 1080Q912 1070 962 1064L968 1080Z" fill="#5a4827" />
      <path d="M895 1080L945 1071L940 1080Z" fill="#a0462c" opacity="0.6" />
      <path d="M969 1037Q962 1058 966 1080" fill="none" stroke="#9a8228" strokeWidth="3.5" />
      <circle cx="1225.5" cy="1061" r="1" fill="#a8946a" />
    </svg>
  );
}

function Tray() {
  return (
    <svg className="h-[43px] w-[420px] overflow-visible" viewBox="1500 1037 420 43" fontFamily="Open Sans, sans-serif" fill="#fff">
      <rect x="1514" y="1049" width="33" height="19" fill="none" stroke="#fff" strokeWidth="2" />
      <path d="M1517.5 1053.5H1543.5M1517.5 1058H1543.5" stroke="#fff" strokeWidth="3" strokeDasharray="3 1.2" />
      <path d="M1517 1063.5H1521M1523 1063.5H1538M1540 1063.5H1544" stroke="#fff" strokeWidth="3" />
      <path d="M1561 1044H1565V1050H1571V1044H1575V1050H1578V1058Q1577 1065 1570 1067V1073H1566V1067Q1559 1065 1558 1058V1050H1561Z" />
      <path d="M1562.5 1059L1566.5 1063L1573.5 1055" fill="none" stroke="#1ba0c8" strokeWidth="2.6" />
      <rect x="1632" y="1051" width="5" height="14" />
      <rect x="1582.2" y="1045.2" width="49" height="26.5" fill="#04c45c" stroke="#fff" strokeWidth="2.4" />
      <text x="1587.5" y="1064" fontSize="15.5" textLength="42" lengthAdjust="spacingAndGlyphs">100%</text>
      <circle cx="1628" cy="1044.5" r="7" fill="#ff0a22" />
      <path d="M1646.5 1062.5H1656L1651.2 1056.5Z" />
      <rect x="1670" y="1050" width="19" height="19" fill="#f08a22" />
      <circle cx="1679.5" cy="1059.5" r="5.3" fill="none" stroke="#fff" strokeWidth="1.6" />
      <path d="M1674.5 1058.5H1684.5M1679.5 1059V1064.5" stroke="#fff" strokeWidth="1.6" />
      <path d="M1699.5 1050.5H1701.8V1068H1699.5ZM1703 1051.5Q1707 1050 1710 1052Q1713 1054 1717 1053V1061Q1713 1062.5 1710 1060.5Q1707 1059 1703 1060.5Z" />
      <circle cx="1712.8" cy="1064.5" r="4.7" fill="#d8232a" />
      <path d="M1710.8 1062.5L1714.8 1066.5M1714.8 1062.5L1710.8 1066.5" stroke="#fff" strokeWidth="1.4" />
      <path d="M1728 1064H1731V1067H1728ZM1732 1062H1735V1067H1732ZM1736 1059.5H1739V1067H1736ZM1740 1057H1743V1067H1740Z" />
      <rect x="1744" y="1053.5" width="3" height="13.5" fill="#8d8270" />
      <path d="M1759 1056H1762L1767.5 1051V1069L1762 1064H1759Z" />
      <path d="M1771.5 1055.5Q1774.5 1060 1771.5 1064.5" fill="none" stroke="#a59a84" strokeWidth="1.3" />
      <text x="1791" y="1065.5" fontSize="13.5" textLength="26.5" lengthAdjust="spacingAndGlyphs">DEU</text>
      <text x="1870.5" y="1055.5" textAnchor="middle" fontSize="13.8" textLength="33" lengthAdjust="spacingAndGlyphs">17:22</text>
      <text x="1870" y="1075" textAnchor="middle" fontSize="13.8" textLength="68" lengthAdjust="spacingAndGlyphs">03.11.2014</text>
    </svg>
  );
}

export default function App() {
  return (
    <div className="flex h-[1080px] w-[1920px] flex-col overflow-hidden bg-[#232323] font-[Lato,sans-serif]">
      <TitleBar />
      <div className="h-[42px] shrink-0"><Logo /></div>
      <div className="flex h-[968px] shrink-0">
        <Sidebar />
        <main className="flex w-[1680px] flex-col">
          <TopTabs />
          <Charts />
          <Swatches />
          <Reading />
          <Patterns />
        </main>
      </div>
      <footer className="flex h-[43px] shrink-0 bg-linear-to-b from-[#604c2d] to-[#57452a]">
        <TaskIcons />
        <Painting />
        <Tray />
      </footer>
    </div>
  );
}
